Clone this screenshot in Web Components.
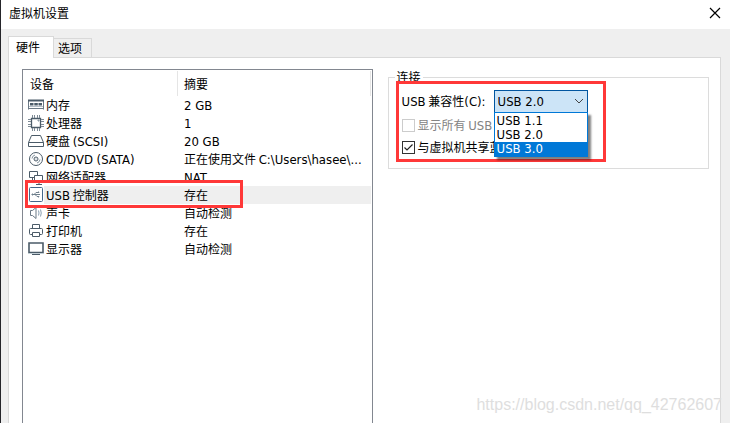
<!DOCTYPE html>
<html lang="zh-CN">
<head>
<meta charset="utf-8">
<title>虚拟机设置</title>
<style>
body {
    margin: 0;
    font: 12px/16px "Noto Sans CJK SC", sans-serif;
    color: #000;
    --latin: 13px/12px "DejaVu Sans Condensed", "Noto Sans", sans-serif;
}
.latin { font: var(--latin); }
</style>
</head>
<body>

<vm-window>
    <span slot="title">虚拟机设置</span>
    <vm-tabs>
        <span slot="tab">硬件</span>
        <span slot="tab">选项</span>
        <vm-devices></vm-devices>
        <vm-group>
            <span slot="legend">连接</span>
            <vm-combo><span class="latin">USB</span> 兼容性<span class="latin">(C):</span></vm-combo>
            <vm-check disabled>显示所有 <span class="latin">USB</span></vm-check>
            <vm-check checked>与虚拟机共享蓝</vm-check>
        </vm-group>
    </vm-tabs>
    <span slot="watermark">https://blog.csdn.net/qq_42762607</span>
</vm-window>

<script>
customElements.define('vm-window', class extends HTMLElement {
    constructor() {
        super();
        this.attachShadow({ mode: 'open' }).innerHTML = `
        <style>
        :host {
            display: flex;
            flex-direction: column;
            position: relative;
            box-sizing: border-box;
            height: 100vh;
            overflow: hidden;
            border-left: 1px solid #25252a;
            background: #efefef;
        }
        header {
            display: flex;
            align-items: center;
            justify-content: space-between;
            box-sizing: border-box;
            height: 29px;
            padding: 0 8px 3px;
            background: #fff;
        }
        button {
            display: flex;
            padding: 1px;
            border: 0;
            background: none;
        }
        main {
            flex: 1;
            display: flex;
            padding: 7px 9px 0 7px;
        }
        #watermark {
            position: absolute;
            right: 8px;
            bottom: 8px;
            font: 16px/20px "Liberation Sans", sans-serif;
            color: #dedede;
        }
        </style>
        <header>
            <slot name="title"></slot>
            <button aria-label="关闭">
                <svg width="12" height="12" viewBox="0 0 12 12" stroke="#000" stroke-width="1.2"><path d="M1 1l10 10M11 1L1 11"/></svg>
            </button>
        </header>
        <main><slot></slot></main>
        <div id="watermark"><slot name="watermark"></slot></div>
        `;
    }
});

customElements.define('vm-tabs', class extends HTMLElement {
    constructor() {
        super();
        this.attachShadow({ mode: 'open' }).innerHTML = `
        <style>
        :host {
            flex: 1;
            display: flex;
            flex-direction: column;
        }
        #tabs {
            display: flex;
            align-items: flex-end;
        }
        #tabs::slotted(*) {
            box-sizing: border-box;
            height: 19px;
            padding: 1px 9px 0 4px;
            border: 1px solid #d9d9d9;
            border-width: 1px 1px 0 0;
        }
        #tabs::slotted([aria-selected="true"]) {
            position: relative;
            height: 22px;
            margin-bottom: -1px;
            padding: 2px 13px 0 7px;
            border-left-width: 1px;
            background: #fff;
        }
        #panel {
            flex: 1;
            display: grid;
            grid-template-columns: 12fr 11fr;
            gap: 15px;
            padding: 11px 11px 0 13px;
            border: 1px solid #d9d9d9;
            border-bottom: 0;
            background: #fff;
        }
        </style>
        <slot id="tabs" name="tab" role="tablist"></slot>
        <div id="panel" role="tabpanel"><slot></slot></div>
        `;
    }
    connectedCallback() {
        const tabs = [...this.querySelectorAll('[slot=tab]')];
        const select = tab => {
            for (let t of tabs) t.setAttribute('aria-selected', t === tab);
        };
        for (let tab of tabs) {
            tab.setAttribute('role', 'tab');
            tab.tabIndex = 0;
            tab.addEventListener('click', () => select(tab));
        }
        select(tabs[0]);
    }
});

const icons = {
    memory: `<path d="M.5 3v9.500M15.500 3v9.500M0 11.500h16" stroke="#6b7985"/><path d="M0 3.500h16" stroke-width="2"/><path d="M2 6h3.500v2.500H2zM6.300 6h3.500v2.500H6.300zM10.500 6H14v2.500h-3.500z" fill="#4b5b68" stroke="none"/><path d="M1 9.500h14" stroke="#b4bec6"/>`,
    cpu: `<path d="M3.500 3.500h9v9h-9z" stroke-width="1.300"/><path d="M10 5h1v1h-1z" stroke="#8494a0"/><path d="M4.500 0v3M6.500 0v3M9.500 0v3M11.500 0v3M4.500 13v3M6.500 13v3M9.500 13v3M11.500 13v3M0 4.500h3M0 6.500h3M0 9.500h3M0 11.500h3M13 4.500h3M13 6.500h3M13 9.500h3M13 11.500h3" stroke="#7d8a95"/>`,
    disk: `<path d="M3.500 2.500h9l3 7v4H.5v-4zM.5 9.500h15"/>`,
    cd: `<circle cx="8" cy="8" r="6.500"/><circle cx="8" cy="8" r="2"/><path d="M8 7.500v1M4 7.500A4 4 0 0 1 7 4M12 8.500A4 4 0 0 1 9 12" stroke="#8494a0"/>`,
    network: `<path d="M1.500 2.500h8v6h-8zM1 11.500h5M4.500 8.500v3"/><path d="M6.500 6.500h8v6h-8z" fill="#fff"/><path d="M11 13v2M8 15.500h6"/>`,
    usb: `<rect x="1.500" y=".5" width="13" height="14" rx="1" fill="#fff" stroke="#44688a"/><g stroke="#71818e"><path d="M4 7.500h8M6 7.500l2-2h2M7 7.500l2 2h1"/><path d="M4 7h1v1H4zM10 5h1v.5h-1zM10 9.500h1v.5h-1z"/></g>`,
    sound: `<path d="M2.500 5.500h2l3.500-3v11l-3.500-3h-2z" stroke="#6b7985"/><path d="M10.500 5.500q1 2.500 0 5M12.500 4.500q1.500 3.500 0 7" stroke="#8aa0b2"/>`,
    printer: `<path d="M4.500 5.500v-4h7v4M4.500 11.500h-2q-1 0-1-1v-4q0-1 1-1h11q1 0 1 1v4q0 1-1 1h-2M4.500 9.500h7v4h-7z"/>`,
    display: `<path d="M1 2h14v9.500H1z" stroke-width="1.600"/><path d="M0 12.500h16" stroke="#c3d0d6"/><path d="M4 13.500h8"/>`,
};

customElements.define('vm-icon', class extends HTMLElement {
    connectedCallback() {
        this.attachShadow({ mode: 'open' }).innerHTML = `
        <style>
        :host { display: block; width: 16px; height: 16px; }
        svg { display: block; }
        </style>
        <svg width="16" height="16" viewBox="0 0 16 16" fill="none" stroke="#4b5b68">${icons[this.getAttribute('name')]}</svg>
        `;
    }
});

const latin = text => `<span class="latin">${text}</span>`;

const devices = [
    ['memory', '内存', latin('2 GB')],
    ['cpu', '处理器', latin('1')],
    ['disk', '硬盘 ' + latin('(SCSI)'), latin('20 GB')],
    ['cd', latin('CD/DVD (SATA)'), '正在使用文件 ' + latin('C:\\Users\\hasee\\...')],
    ['network', '网络适配器', latin('NAT')],
    ['usb', latin('USB') + ' 控制器', '存在'],
    ['sound', '声卡', '自动检测'],
    ['printer', '打印机', '存在'],
    ['display', '显示器', '自动检测'],
];

customElements.define('vm-devices', class extends HTMLElement {
    constructor() {
        super();
        this.attachShadow({ mode: 'open' }).innerHTML = `
        <style>
        :host {
            display: block;
            position: relative;
            padding: 1px;
            border: 1px solid #828790;
            border-bottom: 0;
            min-width: 0;
        }
        table {
            width: 100%;
            table-layout: fixed;
            border-collapse: separate;
            border-spacing: 0;
        }
        th, td {
            padding: 0 0 0 6px;
            font-weight: normal;
            text-align: left;
            white-space: nowrap;
            overflow: hidden;
        }
        th {
            box-sizing: border-box;
            height: 25px;
            border-right: 1px solid #e5e5e5;
        }
        th:first-child { width: 154px; }
        td { height: 18px; }
        td:first-child { padding-left: 4px; }
        .device {
            display: flex;
            align-items: center;
        }
        .name {
            flex: 1;
            padding: 1px 2px;
        }
        .selected td:last-child, .selected .name { background: #efefef; }
        .latin { font: var(--latin); }
        #mark {
            position: absolute;
            top: 110px;
            left: 2px;
            width: 212px;
            height: 22px;
            border: 3px solid #ff3838;
        }
        </style>
        <table>
            <thead><tr><th>设备</th><th>摘要</th></tr></thead>
            <tbody>${devices.map(([icon, name, summary]) => `
                <tr class="${icon === 'usb' ? 'selected' : ''}">
                    <td><div class="device"><vm-icon name="${icon}"></vm-icon><span class="name">${name}</span></div></td>
                    <td>${summary}</td>
                </tr>`).join('')}
            </tbody>
        </table>
        <div id="mark"></div>
        `;
    }
});

customElements.define('vm-group', class extends HTMLElement {
    constructor() {
        super();
        this.attachShadow({ mode: 'open' }).innerHTML = `
        <style>
        :host {
            display: block;
            position: relative;
            min-width: 0;
        }
        fieldset {
            min-width: 0;
            margin: 0;
            padding: 5px 13px 10px;
            border: 1px solid #dcdcdc;
        }
        legend {
            margin-left: -7px;
            padding: 0 2px;
        }
        #mark {
            position: absolute;
            top: 12px;
            left: 8px;
            width: 204px;
            height: 75px;
            border: 3px solid #ff3838;
        }
        </style>
        <fieldset>
            <legend><slot name="legend"></slot></legend>
            <slot></slot>
        </fieldset>
        <div id="mark"></div>
        `;
    }
});

customElements.define('vm-combo', class extends HTMLElement {
    constructor() {
        super();
        this.attachShadow({ mode: 'open' }).innerHTML = `
        <style>
        :host {
            display: flex;
            align-items: center;
            margin-bottom: 1px;
        }
        label {
            width: 92px;
            padding-bottom: 2px;
            white-space: nowrap;
        }
        #box {
            position: relative;
            width: 94px;
        }
        select {
            display: block;
            appearance: none;
            width: 100%;
            height: 23px;
            margin: 0;
            padding: 0 3px;
            border: 1px solid #0055a0;
            border-radius: 0;
            background: #cce4f7;
            color: #000;
            font: var(--latin);
        }
        svg {
            position: absolute;
            top: 8px;
            right: 4px;
            pointer-events: none;
        }
        ul {
            position: absolute;
            z-index: 1;
            top: 100%;
            left: 0;
            right: 0;
            margin: -1px 0 0;
            padding: 1px 0 0;
            list-style: none;
            border: 1px solid #0078d7;
            box-sizing: border-box;
            background: #fff;
            box-shadow: 3px 3px 2px rgba(0, 0, 0, .5);
            font: var(--latin);
            line-height: 14px;
        }
        li { padding: 0 2px; }
        li[aria-selected="true"] {
            background: #0078d7;
            color: #fff;
        }
        </style>
        <label for="version"><slot></slot></label>
        <div id="box">
            <select id="version">
                <option>USB 1.1</option>
                <option selected>USB 2.0</option>
                <option>USB 3.0</option>
            </select>
            <svg width="10" height="7" viewBox="0 0 10 7" fill="none" stroke="#444"><path d="M1 1l4 4 4-4"/></svg>
            <ul role="listbox">
                <li role="option">USB 1.1</li>
                <li role="option">USB 2.0</li>
                <li role="option" aria-selected="true">USB 3.0</li>
            </ul>
        </div>
        `;
    }
});

customElements.define('vm-check', class extends HTMLElement {
    constructor() {
        super();
        this.attachShadow({ mode: 'open' }).innerHTML = `
        <style>
        :host { display: block; }
        :host([disabled]) { color: #838383; }
        label {
            display: flex;
            align-items: center;
            gap: 3px;
            height: 22px;
            white-space: nowrap;
        }
        input {
            flex: none;
            appearance: none;
            width: 13px;
            height: 13px;
            margin: 0;
            border: 1px solid #333;
            background: #fff;
        }
        input:disabled { border-color: #ccc; }
        input:checked {
            background: #fff url("data:image/svg+xml,%3Csvg xmlns='http://www.w3.org/2000/svg' viewBox='0 0 11 11'%3E%3Cpath d='M1.500 5.500l2.500 2.500 5.500-5.500' fill='none' stroke='%23222' stroke-width='1.200'/%3E%3C/svg%3E");
        }
        </style>
        <label><input type="checkbox"><span><slot></slot></span></label>
        `;
    }
    connectedCallback() {
        const input = this.shadowRoot.querySelector('input');
        input.disabled = this.hasAttribute('disabled');
        input.checked = this.hasAttribute('checked');
    }
});
</script>
</body>
</html>
